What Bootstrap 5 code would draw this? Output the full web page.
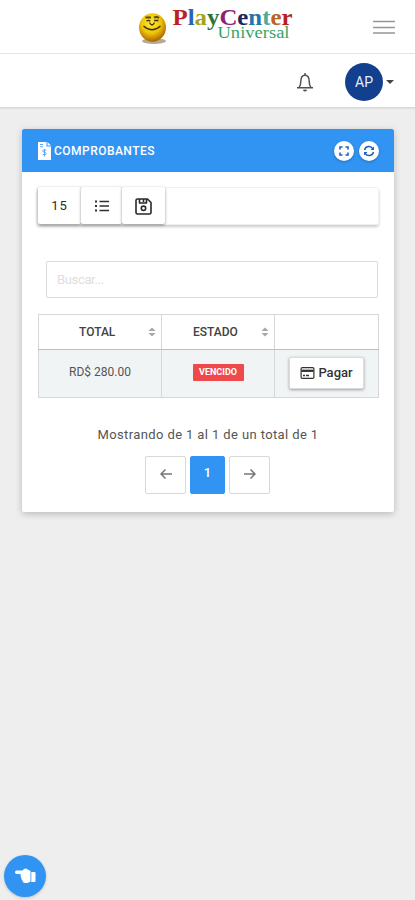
<!DOCTYPE html>
<html lang="es">
<head>
<meta charset="utf-8">
<meta name="viewport" content="width=device-width, initial-scale=1">
<title>Comprobantes</title>
<link href="https://cdn.jsdelivr.net/npm/bootstrap@5.3.0/dist/css/bootstrap.min.css" rel="stylesheet">
<style>
body{font-family:Roboto,"Liberation Sans",sans-serif;font-size:13px;color:#484848;background:#eeeeee;min-height:900px;line-height:1.4}
svg{display:block;flex-shrink:0}
.brandbar{height:54px;border-bottom:1px solid #e4e4e4}
.brandbar .brand{margin-left:132px}
.burger{margin-right:20px;margin-top:1px}
.userbar{height:54px;border-bottom:1px solid #dadada;padding-right:21px;box-shadow:0 1px 1px rgba(0,0,0,.06)}
.userbar .bell{margin-top:3px}
.avatar{width:38px;height:38px;background:#133f8f;color:#e9effa;font-size:14px;margin-left:31px;padding-top:3px;margin-top:2px}
.caret{border:4px solid transparent;border-top-color:#444;border-bottom:0;margin-left:3px;margin-top:2px}
.panel{margin:21px 21px 0 22px;height:383px;border-radius:2px;box-shadow:0 2px 7px rgba(0,0,0,.22)}
.panel-top{height:43px;background:#3194f3;padding:0 15px 0 16px;border-radius:2px 2px 0 0}
.panel-title{font-size:12px;font-weight:500;letter-spacing:.47px;margin:0 0 0 3px;line-height:16px}
.round-tool{width:20px;height:20px;box-shadow:0 1px 3px rgba(0,0,0,.25);color:#1d62bd}
.tools{margin:15px 15px 0 15px;height:38px;border-radius:3px;border:1px solid #f0f0f0;box-shadow:0 2px 3px rgba(0,0,0,.2)}
.tool{height:37px;margin-top:-1px;border-radius:2px;border:0;box-shadow:0 1px 3px rgba(0,0,0,.42);color:#2c2c2c;background:#fff;font-size:13px;letter-spacing:.9px;padding:1px 0 0}
.search{margin:36px 16px 0 24px;width:332px;height:37px;border:1px solid #d9dbdc;border-radius:2px;font-size:13px;padding:0 10px;letter-spacing:-.35px}
.search::placeholder{color:#dedede}
.grid{width:340px;margin:16px 15px 0 16px;table-layout:fixed;border-collapse:collapse}
.grid th,.grid td{border:1px solid #d5d8d9;padding:0;text-align:center;vertical-align:middle}
.grid th{height:35px;font-size:12px;font-weight:500;color:#424242;border-bottom-color:#bdbfc0;letter-spacing:0}
.grid td{height:48px;background:#f1f4f5;font-size:12px;color:#555}
.state{background:#f0494c;color:#fff;font-size:9px;font-weight:700;line-height:17px;width:51px;border-radius:1px;margin:-2px auto 0}
.pay{width:75px;height:32px;margin:-1px 0 0 14px;border-radius:2px;border:1px solid #dcdcdc;background:#fff;box-shadow:0 1px 3px rgba(0,0,0,.35);font-size:13px;font-weight:500;color:#333;padding:0}
.count{margin-top:28px;line-height:18px;letter-spacing:.39px;color:#555}
.pages{margin:13px 1px 0 0;gap:4px}
.pages .page-link{width:41px;height:38px;margin-top:-1px;border:1px solid #d9d9d9;border-radius:2px;color:#666;padding:0 0 3px}
.pages .active .page-link{width:35px;background:#3194f3;border-color:#3194f3;color:#fff;font-size:13px;font-weight:500}
.helper{left:4px;bottom:3px;width:42px;height:42px;background:#3194f3;border:0;padding:0;box-shadow:0 1px 3px rgba(0,0,0,.18)}
</style>
</head>
<body>
<header>
  <div class="brandbar bg-white d-flex align-items-center justify-content-between">
    <a class="brand" href="#" aria-label="PlayCenter Universal">
      <svg width="166" height="54" viewBox="132 0 166 54">
        <defs><radialGradient id="face" cx=".45" cy=".35" r=".65"><stop offset="0" stop-color="#ffec3a"/><stop offset=".55" stop-color="#f0c408"/><stop offset="1" stop-color="#a86400"/></radialGradient></defs>
        <ellipse cx="154" cy="41" rx="12" ry="3" fill="#776344" opacity=".55"/>
        <ellipse cx="152.500" cy="27.500" rx="13.500" ry="14.200" fill="url(#face)"/>
        <path d="M145.500 17.500h5.500M154 17.500q3-1 5 .500" fill="none" stroke="#5d4b05" stroke-width="2"/>
        <path d="M146.500 21q2-1 4 0M154 20.500h4.500M149.500 22.500q2.500 5 5 0M143.500 26q8.500 7.500 17 0" fill="none" stroke="#443300" stroke-width="1.300"/>
        <g font-family="'Liberation Serif',serif">
          <text x="172.500" y="25" font-size="22.500" font-weight="bold" textLength="120" lengthAdjust="spacingAndGlyphs"><tspan fill="#be1e28">P</tspan><tspan fill="#2a65b5">l</tspan><tspan fill="#a3a322">a</tspan><tspan fill="#2c753a">y</tspan><tspan fill="#8b2376">C</tspan><tspan fill="#1c255e">e</tspan><tspan fill="#2476aa">n</tspan><tspan fill="#54a895">t</tspan><tspan fill="#bb6423">e</tspan><tspan fill="#b51f25">r</tspan></text>
          <text x="217.500" y="38" font-size="16.500" fill="#36a464" textLength="72" lengthAdjust="spacingAndGlyphs">Universal</text>
        </g>
      </svg>
    </a>
    <svg class="burger" width="22" height="14" stroke="#959595" stroke-width="1.600"><path d="M0 1.500h22M0 7.500h22M0 13h22"/></svg>
  </div>
  <div class="userbar bg-white d-flex align-items-center justify-content-end">
    <svg class="bell" width="18" height="21" viewBox="0 0 18 21" fill="none" stroke="#505050" stroke-width="1.500"><path d="M1 15.800h16M3 15.500q1.800-2 1.800-6C4.800 5.500 6 3.200 9 3.200s4.200 2.300 4.200 6.300q0 4 1.800 6M9 1v2M7.500 17.800q1.500 2 3 0"/></svg>
    <div class="avatar rounded-circle d-flex align-items-center justify-content-center">AP</div>
    <span class="caret"></span>
  </div>
</header>
<main>
  <section class="panel bg-white">
    <div class="panel-top d-flex align-items-center text-white">
      <svg width="13" height="18" viewBox="0 0 13 18"><path d="M0 0h8.500v4.500H13V18H0zM9.500 0 13 3.500H9.500z" fill="#fff"/><path d="M2 2.500h3M2 4.800h3M8.300 8.300q-3.600-1.200-3.600.7c0 1.600 3.600.9 3.600 2.700q0 1.900-3.700.7M6.500 7v7.500" fill="none" stroke="#5fa9ed" stroke-width="1"/></svg>
      <h1 class="panel-title">COMPROBANTES</h1>
      <div class="d-flex ms-auto" style="gap:5px">
        <span class="round-tool rounded-circle bg-white d-flex align-items-center justify-content-center"><svg width="10" height="10" fill="none" stroke="currentColor" stroke-width="1.600"><path d="M1 3.500V1h2.500M6.500 1H9v2.500M9 6.500V9H6.500M3.500 9H1V6.500"/></svg></span>
        <span class="round-tool rounded-circle bg-white d-flex align-items-center justify-content-center"><svg width="12" height="12" viewBox="0 0 12 12" fill="none" stroke="currentColor" stroke-width="1.500"><path d="M1.500 5A4.500 4.500 0 0 1 9.800 3.700M10.500 7A4.500 4.500 0 0 1 2.200 8.300"/><path d="M11 1.500V5H7.500zM1 10.500V7h3.500z" fill="currentColor" stroke="none"/></svg></span>
      </div>
    </div>
    <div class="tools d-flex">
      <button class="tool d-flex align-items-center justify-content-center" style="width:43px">15</button>
      <button class="tool d-flex align-items-center justify-content-center" style="width:41px" aria-label="Columnas"><svg width="14" height="12" fill="none" stroke="#303030" stroke-width="1.400"><path d="M4.500 1.500H14M4.500 6H14M4.500 10.500H14"/><path d="M0 1.500h2M0 6h2M0 10.500h2" stroke-width="2"/></svg></button>
      <button class="tool d-flex align-items-center justify-content-center" style="width:43px" aria-label="Guardar"><svg width="17" height="17" viewBox="0 0 17 17" fill="none" stroke="#292929" stroke-width="1.600" stroke-linejoin="round"><path d="M2.500 1h10L16 4.500v10q0 1.500-1.500 1.500h-12Q1 16 1 14.500v-12Q1 1 2.500 1zM4.500 1v4h7V1M8.500 1v3"/><circle cx="8.500" cy="10.300" r="2.200"/></svg></button>
    </div>
    <input class="search form-control shadow-none" type="text" placeholder="Buscar..." aria-label="Buscar">
    <table class="grid">
      <colgroup><col style="width:123px"><col style="width:113px"><col style="width:104px"></colgroup>
      <thead><tr>
        <th><div class="d-flex align-items-center justify-content-between" style="padding:0 5px 0 40px">TOTAL <svg width="8" height="10" fill="#a7a7a7"><path d="M.5 4 4 .500 7.500 4zM.5 6 4 9.500 7.500 6z"/></svg></div></th>
        <th><div class="d-flex align-items-center justify-content-between" style="padding:0 5px 0 31px">ESTADO <svg width="8" height="10" fill="#a7a7a7"><path d="M.5 4 4 .500 7.500 4zM.5 6 4 9.500 7.500 6z"/></svg></div></th>
        <th></th>
      </tr></thead>
      <tbody><tr>
        <td><div style="margin-top:-2px">RD$ 280.00</div></td>
        <td><div class="state">VENCIDO</div></td>
        <td><button class="pay d-flex align-items-center justify-content-center"><svg width="15" height="12" viewBox="0 0 14 12" fill="none" stroke="#333" style="margin-right:3px"><rect x=".6" y=".6" width="12.800" height="10.800" rx="1.200" stroke-width="1.200"/><path d="M1 3.800h12" stroke-width="2.300"/><path d="M2.500 8.500h2M5.500 8.500h3" stroke-width="1.400"/></svg>Pagar</button></td>
      </tr></tbody>
    </table>
    <div class="count text-center">Mostrando de 1 al 1 de un total de 1</div>
    <nav aria-label="Páginas">
      <ul class="pages list-unstyled d-flex justify-content-center">
        <li><a class="page-link d-flex align-items-center justify-content-center" href="#" aria-label="Anterior"><svg width="12" height="10" fill="none" stroke="#777" stroke-width="1.500"><path d="M12 5H1M5.500.500 1 5l4.500 4.500"/></svg></a></li>
        <li class="active"><a class="page-link d-flex align-items-center justify-content-center" href="#">1</a></li>
        <li><a class="page-link d-flex align-items-center justify-content-center" href="#" aria-label="Siguiente"><svg width="12" height="10" fill="none" stroke="#777" stroke-width="1.500"><path d="M0 5h11M6.500.500 11 5 6.500 9.500"/></svg></a></li>
      </ul>
    </nav>
  </section>
</main>
<button class="helper position-fixed rounded-circle d-flex align-items-center justify-content-center" aria-label="Ayuda"><svg width="21" height="16" viewBox="0 0 21 16" fill="#fff"><path d="M1.500 2.500h6L9 1q1.200-1 2.500-.3l4 2.300V13.500l-3 1.500H9.800Q7.600 14.800 7.400 12.500 6 11.500 6.300 9.800 5.200 8.500 5.600 6H1.500Q0 5.800 0 4.200T1.500 2.500zM16.300 4H19.500q1 0 1 1v8q0 1-1 1h-3.200z"/></svg></button>
<script src="https://cdn.jsdelivr.net/npm/bootstrap@5.3.0/dist/js/bootstrap.bundle.min.js"></script>
</body>
</html>
